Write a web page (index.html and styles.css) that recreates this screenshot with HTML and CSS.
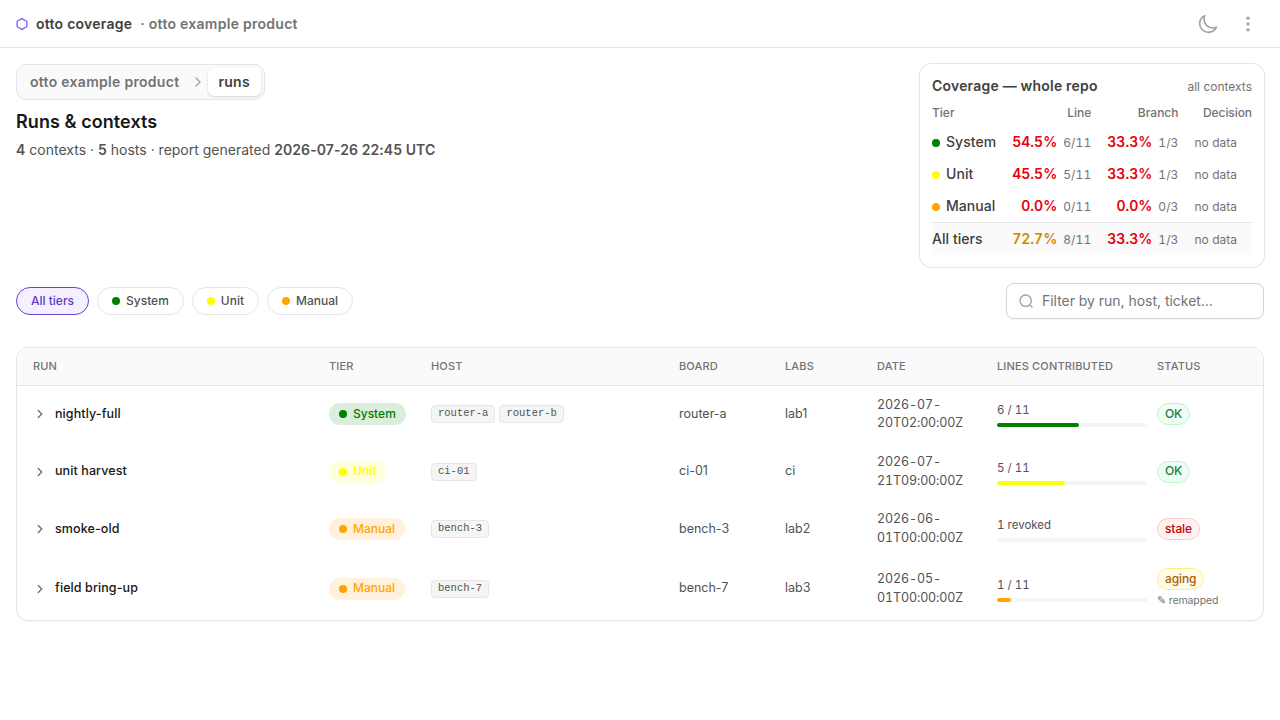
FILE: index.html
```html
<!DOCTYPE html>
<html lang="en">
<head>
	<meta charset="UTF-8">
	<title>Runs &amp; contexts · otto coverage</title>
	<link rel="stylesheet" href="styles.css">
</head>
<body>
<header class="topbar">
	<svg class="logo" width="12" height="14" viewBox="0 0 12 14" fill="none" stroke="#7c5cfc" stroke-width="1.3"><path d="M6 1.6 10.9 4.3v5.4L6 12.4 1.1 9.7V4.3z"/></svg>
	<span class="brand">otto coverage</span>
	<span class="product">· otto example product</span>
	<div class="tools">
		<svg width="20" height="20" viewBox="0 0 24 24" fill="none" stroke="#a3a3a3" stroke-width="2" stroke-linecap="round" stroke-linejoin="round"><path d="M22 15.844a10.424 10.424 0 0 1-4.306.925c-5.779 0-10.463-4.684-10.463-10.462 0-1.536.33-2.994.925-4.307A10.464 10.464 0 0 0 2 11.538C2 17.316 6.684 22 12.462 22c4.243 0 7.896-2.526 9.538-6.156Z"/></svg>
		<svg width="20" height="20" viewBox="0 0 24 24" fill="#a3a3a3"><circle cx="12" cy="5" r="2"/><circle cx="12" cy="12" r="2"/><circle cx="12" cy="19" r="2"/></svg>
	</div>
</header>
<main>
<div class="intro">
	<div>
		<nav class="crumbs">
			<a class="crumb">otto example product</a>
			<svg width="16" height="16" viewBox="0 0 24 24" fill="none" stroke="#a3a3a3" stroke-width="2" stroke-linecap="round" stroke-linejoin="round"><path d="m9 18 6-6-6-6"/></svg>
			<span class="crumb current">runs</span>
		</nav>
		<h1>Runs &amp; contexts</h1>
		<p class="summary"><b>4</b> contexts · <b>5</b> hosts · report generated <b>2026-07-26 22:45 UTC</b></p>
	</div>
	<section class="coverage">
		<div class="coverage-head"><h2>Coverage — whole repo</h2><span>all contexts</span></div>
		<table>
			<thead>
				<tr><th>Tier</th><th>Line</th><th>Branch</th><th>Decision</th></tr>
			</thead>
			<tbody>
				<tr><td><i class="dot system"></i>System</td><td><b>54.5%</b><small>6/11</small></td><td><b>33.3%</b><small>1/3</small></td><td>no data</td></tr>
				<tr><td><i class="dot unit"></i>Unit</td><td><b>45.5%</b><small>5/11</small></td><td><b>33.3%</b><small>1/3</small></td><td>no data</td></tr>
				<tr><td><i class="dot manual"></i>Manual</td><td><b>0.0%</b><small>0/11</small></td><td><b>0.0%</b><small>0/3</small></td><td>no data</td></tr>
				<tr class="total"><td>All tiers</td><td><b class="mid">72.7%</b><small>8/11</small></td><td><b>33.3%</b><small>1/3</small></td><td>no data</td></tr>
			</tbody>
		</table>
	</section>
</div>
<div class="filters">
	<button class="chip active">All tiers</button>
	<button class="chip"><i class="dot system"></i>System</button>
	<button class="chip"><i class="dot unit"></i>Unit</button>
	<button class="chip"><i class="dot manual"></i>Manual</button>
	<label class="search">
		<svg width="16" height="16" viewBox="0 0 24 24" fill="none" stroke="#a3a3a3" stroke-width="2.1" stroke-linecap="round" stroke-linejoin="round"><path d="m21 21-3.5-3.5M20 11.5a8.5 8.5 0 1 1-17 0 8.5 8.5 0 0 1 17 0Z"/></svg>
		<input type="text" placeholder="Filter by run, host, ticket...">
	</label>
</div>
<div class="runs">
<table>
	<colgroup><col class="c-run"><col class="c-tier"><col class="c-host"><col class="c-board"><col class="c-labs"><col class="c-date"><col class="c-lines"><col></colgroup>
	<thead>
		<tr><th>Run</th><th>Tier</th><th>Host</th><th>Board</th><th>Labs</th><th>Date</th><th>Lines contributed</th><th>Status</th></tr>
	</thead>
	<tbody>
		<tr>
			<td><div class="name"><svg width="14" height="14" viewBox="0 0 24 24"><path d="m9 18 6-6-6-6"/></svg>nightly-full</div></td>
			<td><span class="tier t-system"><i class="dot system"></i>System</span></td>
			<td><div class="hosts"><code>router-a</code><code>router-b</code></div></td>
			<td>router-a</td>
			<td>lab1</td>
			<td class="date">2026-07-20T02:00:00Z</td>
			<td><div class="lines">6 / 11</div><div class="bar"><div class="system" style="width: 54.5%"></div></div></td>
			<td><span class="status ok">OK</span></td>
		</tr>
		<tr>
			<td><div class="name"><svg width="14" height="14" viewBox="0 0 24 24"><path d="m9 18 6-6-6-6"/></svg>unit harvest</div></td>
			<td><span class="tier t-unit"><i class="dot unit"></i>Unit</span></td>
			<td><div class="hosts"><code>ci-01</code></div></td>
			<td>ci-01</td>
			<td>ci</td>
			<td class="date">2026-07-21T09:00:00Z</td>
			<td><div class="lines">5 / 11</div><div class="bar"><div class="unit" style="width: 45.5%"></div></div></td>
			<td><span class="status ok">OK</span></td>
		</tr>
		<tr>
			<td><div class="name"><svg width="14" height="14" viewBox="0 0 24 24"><path d="m9 18 6-6-6-6"/></svg>smoke-old</div></td>
			<td><span class="tier t-manual"><i class="dot manual"></i>Manual</span></td>
			<td><div class="hosts"><code>bench-3</code></div></td>
			<td>bench-3</td>
			<td>lab2</td>
			<td class="date">2026-06-01T00:00:00Z</td>
			<td><div class="lines">1 revoked</div><div class="bar"></div></td>
			<td><span class="status stale">stale</span></td>
		</tr>
		<tr>
			<td><div class="name"><svg width="14" height="14" viewBox="0 0 24 24"><path d="m9 18 6-6-6-6"/></svg>field bring-up</div></td>
			<td><span class="tier t-manual"><i class="dot manual"></i>Manual</span></td>
			<td><div class="hosts"><code>bench-7</code></div></td>
			<td>bench-7</td>
			<td>lab3</td>
			<td class="date">2026-05-01T00:00:00Z</td>
			<td><div class="lines">1 / 11</div><div class="bar"><div class="manual" style="width: 9.1%"></div></div></td>
			<td><span class="status aging">aging</span><div class="note">✎ remapped</div></td>
		</tr>
	</tbody>
</table>
</div>
</main>
</body>
</html>
```
FILE: styles.css
```css
*{
	box-sizing: border-box;
	margin: 0;
	padding: 0;
}
body{
	font-family: Inter, "Liberation Sans", sans-serif;
	font-size: 14px;
	line-height: 20px;
	color: #525252;
	background-color: #fff;
}
svg{
	display: block;
	flex: none;
}
table{
	border-collapse: separate;
	border-spacing: 0;
}
th{
	text-align: left;
	font-weight: 500;
}
.topbar{
	height: 48px;
	padding: 0 16px;
	display: flex;
	align-items: center;
	border-bottom: 1px solid #e5e5e5;
	font-weight: 600;
}
.brand{
	margin-left: 8px;
	letter-spacing: .25px;
	color: #404040;
}
.product{
	margin-left: 8px;
	letter-spacing: .27px;
	color: #737373;
}
.tools{
	margin-left: auto;
	padding-right: 6px;
	display: flex;
	gap: 20px;
}
main{
	padding: 16px;
}
.intro{
	display: flex;
	justify-content: space-between;
	align-items: flex-start;
}
.crumbs{
	width: fit-content;
	height: 36px;
	padding: 0 3px;
	display: flex;
	align-items: center;
	border: 1px solid #e5e5e5;
	border-radius: 10px;
	background-color: #fafafa;
	font-weight: 600;
	letter-spacing: .29px;
}
.crumb{
	padding: 4px 10px;
	color: #737373;
}
.crumbs svg{
	margin: 0 2px 0 1px;
}
.current{
	padding-right: 11px;
	color: #404040;
	background-color: #fff;
	border-radius: 6px;
	box-shadow: 0 1px 3px rgba(0,0,0,.1), 0 1px 2px rgba(0,0,0,.06);
}
h1{
	margin-top: 8px;
	font-size: 18px;
	line-height: 28px;
	font-weight: 600;
	letter-spacing: .07px;
	color: #171717;
}
.summary{
	margin-top: 4px;
}
.summary b{
	font-weight: 600;
	letter-spacing: .08px;
}
.dot{
	display: inline-block;
	flex: none;
	width: 8px;
	height: 8px;
	margin-right: 6px;
	border-radius: 50%;
}
.system{
	background-color: green;
}
.unit{
	background-color: yellow;
}
.manual{
	background-color: orange;
}

/* whole-repo coverage card */
.coverage{
	width: 344px;
	padding: 12px;
	border-radius: 12px;
	box-shadow: 0 0 0 1px #e5e5e5;
}
.coverage-head{
	height: 20px;
	display: flex;
	justify-content: space-between;
	align-items: baseline;
	font-size: 12px;
	color: #737373;
}
h2{
	font-size: 14px;
	font-weight: 600;
	letter-spacing: .2px;
	color: #404040;
}
.coverage table{
	width: 100%;
	white-space: nowrap;
}
.coverage th{
	height: 30px;
	padding-top: 4px;
	font-size: 12px;
	line-height: 18px;
	color: #737373;
}
.coverage td{
	height: 32px;
	text-align: right;
}
.coverage th + th{
	text-align: right;
}
.coverage th + th,
.coverage td + td{
	padding-left: 16px;
}
.coverage td:first-child{
	text-align: left;
	font-weight: 500;
	letter-spacing: .05px;
	color: #404040;
}
.coverage th:last-child{
	width: 74px;
	letter-spacing: -.08px;
}
.coverage td:last-child{
	padding-top: 1px;
	text-align: left;
	font-size: 12px;
	color: #737373;
}
.coverage b{
	font-weight: 600;
	color: #e7000b;
	font-variant-numeric: tabular-nums;
}
.coverage .mid{
	color: #d08700;
}
.coverage small{
	margin-left: 6px;
	font-size: 12px;
	letter-spacing: .1px;
	color: #737373;
	font-variant-numeric: tabular-nums;
}
.coverage .dot{
	vertical-align: 0;
}
.total td{
	height: 33px;
	border-top: 1px solid #e5e5e5;
	background-color: #fafafa;
}

/* tier chips and search */
.filters{
	margin-top: 16px;
	height: 36px;
	display: flex;
	align-items: center;
	gap: 8px;
}
.chip{
	height: 28px;
	padding: 0 14px;
	display: flex;
	align-items: center;
	border: 1px solid #e5e5e5;
	border-radius: 14px;
	background-color: #fff;
	font: 500 12px/18px Inter, sans-serif;
	color: #525252;
}
.active{
	border-color: #6941d9;
	background-color: #f4f0ff;
	color: #5b3cc4;
}
.search{
	width: 258px;
	height: 36px;
	margin-left: auto;
	padding: 0 11px;
	display: flex;
	align-items: center;
	gap: 8px;
	border: 1px solid #d4d4d4;
	border-radius: 8px;
	box-shadow: 0 1px 2px rgba(0,0,0,.05);
}
.search input{
	width: 100%;
	border: 0;
	outline: 0;
	background: none;
	font: 14px/20px Inter, sans-serif;
	letter-spacing: -.03px;
}
.search input::placeholder{
	color: #737373;
}

/* runs table */
.runs{
	margin-top: 28px;
	border: 1px solid #e5e5e5;
	border-radius: 12px;
	overflow: hidden;
	box-shadow: 0 1px 2px rgba(0,0,0,.05);
}
.runs table{
	width: 100%;
	table-layout: fixed;
	font-size: 12.5px;
	line-height: 18.57px;
}
.c-run{ width: 312px; }
.c-tier{ width: 102px; }
.c-host{ width: 248px; }
.c-board{ width: 106px; }
.c-labs{ width: 92px; }
.c-date{ width: 120px; }
.c-lines{ width: 160px; }
.runs th{
	height: 38px;
	padding-bottom: 1px;
	border-bottom: 1px solid #e5e5e5;
	background-color: #fafafa;
	font-size: 11px;
	line-height: 16px;
	letter-spacing: .15px;
	text-transform: uppercase;
	color: #737373;
}
.runs td{
	height: 57.4px;
	padding-bottom: 1px;
	vertical-align: middle;
}
.runs tr:last-child td{
	height: 62px;
}
.runs th:first-child,
.runs td:first-child{
	padding-left: 16px;
}
.name{
	display: flex;
	align-items: center;
	gap: 8px;
	font-weight: 500;
	letter-spacing: .1px;
	color: #171717;
}
.name svg{
	fill: none;
	stroke: #737373;
	stroke-width: 2.4;
	stroke-linecap: round;
	stroke-linejoin: round;
}
.tier{
	height: 22px;
	padding: 0 10px;
	display: inline-flex;
	align-items: center;
	border-radius: 11px;
	font-size: 12px;
	font-weight: 500;
	vertical-align: middle;
}
.t-system{
	color: green;
	background-color: #dbeedb;
}
.t-unit{
	color: yellow;
	background-color: #ffffdb;
}
.t-manual{
	color: orange;
	background-color: #fff1db;
}
.hosts{
	display: flex;
	gap: 4px;
}
.hosts code{
	height: 18px;
	padding: 0 6px;
	border: 1px solid #e5e5e5;
	border-radius: 4px;
	background-color: #f5f5f5;
	font: 10.5px/14px "Liberation Mono", monospace;
}
.runs .date{
	letter-spacing: -.12px;
	font-variant-numeric: tabular-nums;
}
.lines{
	font-size: 11.5px;
	line-height: 18px;
	font-variant-numeric: tabular-nums;
}
.bar{
	width: 150px;
	height: 4px;
	margin-top: 4px;
	border-radius: 2px;
	background-color: #f5f5f5;
}
.bar div{
	height: 4px;
	border-radius: 2px;
}
.status{
	height: 22px;
	padding: 0 7px;
	display: inline-flex;
	align-items: center;
	border: 1px solid;
	border-radius: 11px;
	font-size: 12px;
	font-weight: 500;
	letter-spacing: -.1px;
	vertical-align: middle;
}
.ok{
	color: #15803d;
	border-color: #b9f8cf;
	background-color: #f0fdf4;
}
.stale{
	color: #c10007;
	border-color: #ffc9c9;
	background-color: #fef2f2;
}
.aging{
	color: #a65f00;
	border-color: #fff085;
	background-color: #fefce8;
}
.note{
	margin-top: 3px;
	font-size: 10.5px;
	line-height: 16px;
	letter-spacing: -.1px;
	color: #737373;
}
```
